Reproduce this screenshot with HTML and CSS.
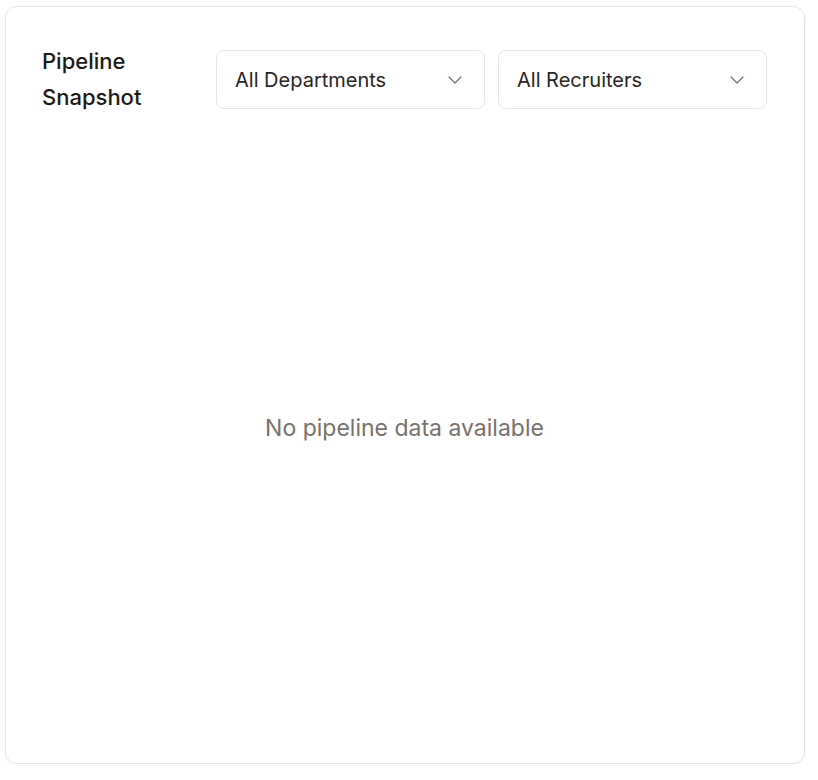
FILE: index.html
```html
<!DOCTYPE html>
<html>
<head>
<meta charset="utf-8">
<link rel="stylesheet" href="styles.css">
</head>
<body>
<div class="card">
  <div class="header">
    <h2 class="title">Pipeline Snapshot</h2>
    <div class="select">
      <span>All Departments</span>
      <svg class="chev" width="24" height="24" viewBox="0 0 24 24" fill="none" stroke="currentColor" stroke-width="1.25" stroke-linecap="round" stroke-linejoin="round"><path d="M6 9l6 6 6-6"/></svg>
    </div>
    <div class="select">
      <span>All Recruiters</span>
      <svg class="chev" width="24" height="24" viewBox="0 0 24 24" fill="none" stroke="currentColor" stroke-width="1.25" stroke-linecap="round" stroke-linejoin="round"><path d="M6 9l6 6 6-6"/></svg>
    </div>
  </div>
  <div class="empty">No pipeline data available</div>
</div>
</body>
</html>
```
FILE: styles.css
```css
* { box-sizing: border-box; }
html, body { margin: 0; padding: 0; background: #ffffff; }
body {
  font-family: Inter, "Noto Sans", sans-serif;
  color: #1c1917;
  padding: 6px 14px 0 5px;
}
.card {
  width: 800px;
  height: 758px;
  border: 1px solid #e5e5e5;
  border-radius: 12px;
  box-shadow: 0 1px 3px rgba(0,0,0,0.06);
  padding: 42px 37px 37px 36px;
  display: flex;
  flex-direction: column;
}
.header {
  display: flex;
  align-items: flex-start;
  gap: 13px;
}
.title {
  flex: 1;
  margin: -6px 0 0 0;
  font-size: 22px;
  font-weight: 500;
  line-height: 36px;
  color: #1c1917;
}
.select {
  width: 269px;
  height: 59px;
  margin-top: 1px;
  border: 1px solid #e7e5e4;
  border-radius: 8px;
  display: flex;
  align-items: center;
  justify-content: space-between;
  padding: 0 17px 0 18px;
  font-size: 20px;
  color: #292524;
}
.chev { color: #78716c; }
.empty {
  flex: 1;
  display: flex;
  align-items: center;
  justify-content: center;
  font-size: 23px;
  color: #78716c;
  padding-top: 14px;
}
```
